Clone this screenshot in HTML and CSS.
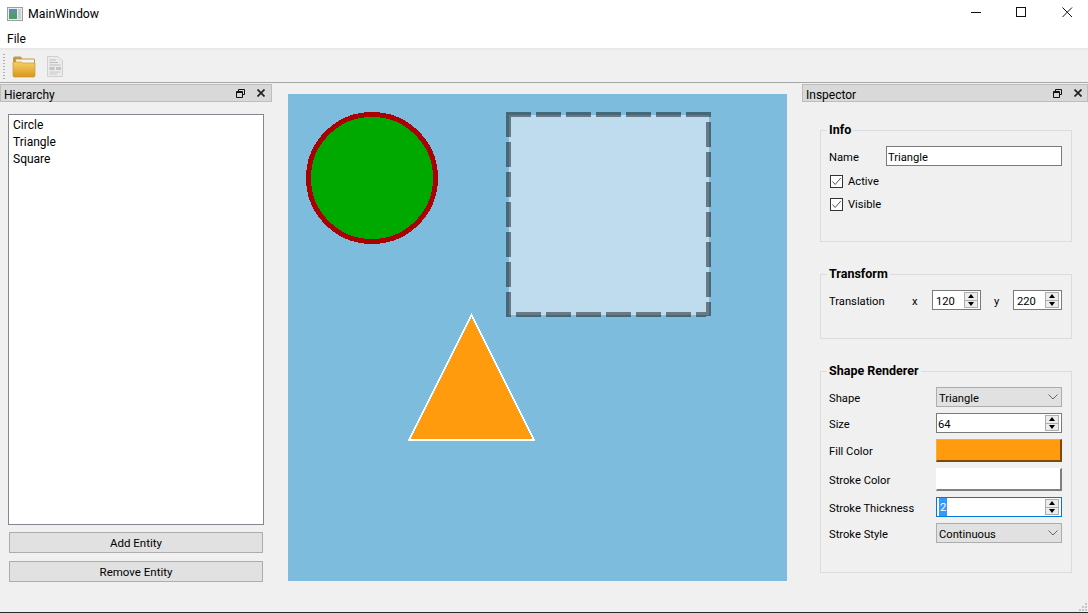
FILE: index.html
```html
<!DOCTYPE html>
<html lang="en">
<head>
    <meta charset="UTF-8">
    <meta name="viewport" content="width=device-width, initial-scale=1.0">
    <title>MainWindow</title>
    <link rel="stylesheet" href="styles.css">
</head>
<body>
    <div id="window">
        <!-- title bar -->
        <div id="titlebar">
            <svg class="app-icon" width="16" height="14" viewBox="0 0 16 14">
                <rect x="0.5" y="0.5" width="15" height="13" fill="#e8ecee" stroke="#9a9fa3"/>
                <rect x="2" y="2" width="8" height="10" fill="#5f8f9c"/>
                <rect x="2" y="7" width="8" height="5" fill="#4f9a6f"/>
                <rect x="11" y="2" width="3" height="10" fill="#c9ced2"/>
            </svg>
            <span class="title-text">MainWindow</span>
            <div class="win-buttons">
                <svg width="46" height="26" viewBox="0 0 46 26"><path class="win-stroke" d="M18 12.500H28"/></svg>
                <svg width="46" height="26" viewBox="0 0 46 26"><rect class="win-stroke" x="17.500" y="7.500" width="9" height="9"/></svg>
                <svg width="46" height="26" viewBox="0 0 46 26"><path class="win-stroke" d="M17.500 7.500L27 17M27 7.500L17.500 17"/></svg>
            </div>
        </div>
        <div id="menubar"><span>File</span></div>

        <!-- toolbar -->
        <div id="toolbar">
            <div class="grip"></div>
            <svg class="tool-icon" width="24" height="23" viewBox="0 0 24 23">
                <defs>
                    <linearGradient id="folderFill" x1="0" y1="0" x2="0" y2="1">
                        <stop offset="0" stop-color="#f6d060"/>
                        <stop offset="1" stop-color="#d9961f"/>
                    </linearGradient>
                </defs>
                <path d="M1 3.500Q1 1.500 3 1.500H8.500L10.500 3.500H22Q23 3.500 23 5V10H1Z" fill="#c2984a"/>
                <rect x="4" y="4.500" width="18" height="4" fill="#f6f3e8"/>
                <path d="M1 7H9L11 8H23V20.500Q23 22 21.500 22H2.500Q1 22 1 20.500Z" fill="url(#folderFill)" stroke="#c58e2a" stroke-width="0.6"/>
            </svg>
            <svg class="tool-icon doc" width="18" height="23" viewBox="0 0 18 23">
                <path d="M1.500 1.500H12L16.500 6V21.500H1.500Z" fill="#ebebeb" stroke="#d0d0d0"/>
                <path d="M3.500 5H10M3.500 7.500H12M3.500 10H14.500" stroke="#bdbdbd" fill="none"/>
                <rect x="3.500" y="12" width="5" height="3" fill="#c4c4c4"/>
                <rect x="10" y="12" width="5" height="3" fill="#c4c4c4"/>
                <path d="M3.500 17H14.500M3.500 19H11" stroke="#c8c8c8" fill="none"/>
            </svg>
        </div>

        <div id="main">
            <!-- left dock -->
            <div id="hierarchy" class="dock">
                <div class="dock-title">
                    <span>Hierarchy</span>
                    <svg class="dock-float" width="9" height="9" viewBox="0 0 9 9"><path d="M2.500 2.500V0.500H8.500V5.500H6.500M0.500 2.500H6.500V8.500H0.500ZM0.500 3.500H6.500" fill="none" stroke="#111"/></svg>
                    <svg class="dock-close" width="8" height="8" viewBox="0 0 8 8"><path d="M0.500 0.500L7.500 7.500M7.500 0.500L0.500 7.500" fill="none" stroke="#222" stroke-width="1.700"/></svg>
                </div>
                <div class="hierarchy-body">
                    <ul id="entities">
                        <li>Circle</li>
                        <li>Triangle</li>
                        <li>Square</li>
                    </ul>
                    <button class="bt">Add Entity</button>
                    <button class="bt">Remove Entity</button>
                </div>
            </div>

            <!-- scene -->
            <svg id="scene" width="499" height="487" viewBox="288 94 499 487">
                <circle class="circle" cx="372" cy="178" r="63.500"/>
                <rect class="square-fill" x="508.500" y="114.500" width="200" height="200"/>
                <path class="dash" d="M506 114.500H711"/>
                <path class="dash" d="M508.500 317V117"/>
                <path class="dash" d="M708.500 122V316"/>
                <path class="dash" d="M516 314.500H706"/>
                <path class="triangle" d="M471.500 315L409 440H534Z"/>
            </svg>

            <!-- right dock -->
            <div id="inspector" class="dock">
                <div class="dock-title">
                    <span>Inspector</span>
                    <svg class="dock-float" width="9" height="9" viewBox="0 0 9 9"><path d="M2.500 2.500V0.500H8.500V5.500H6.500M0.500 2.500H6.500V8.500H0.500ZM0.500 3.500H6.500" fill="none" stroke="#111"/></svg>
                    <svg class="dock-close" width="8" height="8" viewBox="0 0 8 8"><path d="M0.500 0.500L7.500 7.500M7.500 0.500L0.500 7.500" fill="none" stroke="#222" stroke-width="1.700"/></svg>
                </div>
                <div class="inspector-body">
                    <fieldset class="group info">
                        <legend>Info</legend>
                        <div class="name-row">
                            <label>Name</label>
                            <div class="field name-field"><span>Triangle</span></div>
                        </div>
                        <div class="check-row"><span class="check"><svg width="11" height="11" viewBox="0 0 11 11"><path d="M1.500 5.500L4.200 8.500L9.800 2" fill="none" stroke="#555"/></svg></span>Active</div>
                        <div class="check-row"><span class="check"><svg width="11" height="11" viewBox="0 0 11 11"><path d="M1.500 5.500L4.200 8.500L9.800 2" fill="none" stroke="#555"/></svg></span>Visible</div>
                    </fieldset>

                    <fieldset class="group transform">
                        <legend>Transform</legend>
                        <div class="translation">
                            <label class="t-label">Translation</label>
                            <label class="t-x">x</label>
                            <div class="field spin t-spin"><span>120</span><span class="spin-btns"><i class="up"></i><i class="down"></i></span></div>
                            <label class="t-y">y</label>
                            <div class="field spin t-spin"><span>220</span><span class="spin-btns"><i class="up"></i><i class="down"></i></span></div>
                        </div>
                    </fieldset>

                    <fieldset class="group renderer">
                        <legend>Shape Renderer</legend>
                        <div class="form-grid">
                            <label>Shape</label>
                            <div class="combo"><span>Triangle</span><svg width="10" height="6" viewBox="0 0 10 6"><path d="M0.500 0.500L5 5L9.500 0.500" fill="none" stroke="#666"/></svg></div>
                            <label>Size</label>
                            <div class="field spin"><span>64</span><span class="spin-btns"><i class="up"></i><i class="down"></i></span></div>
                            <label>Fill Color</label>
                            <div class="swatch fill"></div>
                            <label>Stroke Color</label>
                            <div class="swatch stroke"></div>
                            <label>Stroke Thickness</label>
                            <div class="field spin focused"><span class="selected">2</span><span class="spin-btns"><i class="up"></i><i class="down"></i></span></div>
                            <label>Stroke Style</label>
                            <div class="combo"><span>Continuous</span><svg width="10" height="6" viewBox="0 0 10 6"><path d="M0.500 0.500L5 5L9.500 0.500" fill="none" stroke="#666"/></svg></div>
                        </div>
                    </fieldset>
                </div>
            </div>
        </div>
        <svg id="size-grip" width="10" height="10" viewBox="0 0 10 10">
            <path d="M7 1h2v2h-2zM4 4h2v2h-2zM7 4h2v2h-2zM1 7h2v2h-2zM4 7h2v2h-2zM7 7h2v2h-2z" fill="#c4c4c4"/>
        </svg>
    </div>
</body>
</html>
```

FILE: styles.css
```css
*{
    box-sizing: border-box;
}

body{
    margin: 0;
    font-family: Roboto, "Open Sans", sans-serif;
    font-size: 11.2px;
    color: #000000;
    background-color: #f0f0f0;
}

#window{
    position: relative;
    width: 1088px;
    height: 613px;
    display: flex;
    flex-direction: column;
    border-bottom: 1px solid #2a2a2a;
    overflow: hidden;
}

#titlebar{
    height: 27px;
    flex: none;
    display: flex;
    align-items: center;
    background-color: #ffffff;
    padding-left: 7px;
}

.title-text{
    margin-left: 5px;
    font-size: 12.300px;
}

.win-buttons{
    margin-left: auto;
    display: flex;
    flex: none;
    align-self: flex-start;
    margin-right: -3px;
}

.win-stroke{
    fill: none;
    stroke: #111111;
    stroke-width: 1;
}

#menubar{
    height: 21px;
    flex: none;
    background-color: #ffffff;
    padding: 5px 0 0 7px;
    font-size: 12px;
}

#toolbar{
    height: 35px;
    flex: none;
    display: flex;
    align-items: center;
    border-top: 2px solid #e9e9e9;
    border-bottom: 1px solid #a6a6a6;
    padding-left: 3px;
}

.grip{
    width: 2px;
    height: 25px;
    background-image: linear-gradient(#b0b0b0 50%, transparent 50%);
    background-size: 2px 3px;
}

.tool-icon{
    margin-left: 7px;
}

.tool-icon.doc{
    margin-left: 10px;
}

#main{
    flex: 1;
    display: flex;
    align-items: flex-start;
    min-height: 0;
}

.dock-title{
    height: 18px;
    margin-top: 1px;
    display: flex;
    align-items: center;
    background-color: #d9d9d9;
    border: 1px solid #bdbdbd;
    padding-left: 3px;
    font-size: 12px;
}

.dock-title span{
    padding-top: 3px;
}

.dock-float{
    margin-left: auto;
}

.dock-close{
    margin: 0 6px 0 12px;
}

#inspector .dock-close{
    margin-right: 5px;
}

#hierarchy{
    width: 272px;
    flex: none;
}

.hierarchy-body{
    display: flex;
    flex-direction: column;
    padding: 12px 8px 0 8px;
}

#entities{
    list-style: none;
    margin: 0 0 7px 0;
    padding: 2px 4px;
    width: 256px;
    height: 411px;
    background-color: #ffffff;
    border: 1px solid #828790;
    font-size: 12px;
}

#entities li{
    height: 17px;
    line-height: 17px;
}

.bt{
    width: 254px;
    height: 21px;
    margin: 0 0 8px 1px;
    padding: 0;
    background-color: #e1e1e1;
    border: 1px solid #adadad;
    font: inherit;
    font-size: 11.500px;
    color: #000000;
}

#scene{
    flex: none;
    margin: 11px 15px 0 16px;
    background-color: #7dbcdd;
}

.circle{
    fill: #00a900;
    stroke: #aa0000;
    stroke-width: 5;
    shape-rendering: crispEdges;
}

.square-fill{
    fill: #bedcee;
    shape-rendering: crispEdges;
}

/* half see-through, so the part over the fill comes out lighter */
.dash{
    fill: none;
    stroke: #000000;
    stroke-opacity: 0.45;
    stroke-width: 5;
    stroke-dasharray: 25 5;
    shape-rendering: crispEdges;
}

.triangle{
    fill: #ff9b0d;
    stroke: #ffffff;
    stroke-width: 2;
    shape-rendering: crispEdges;
}

#inspector{
    width: 286px;
    flex: none;
}

.inspector-body{
    display: flex;
    flex-direction: column;
    gap: 24px;
    padding: 20px 16px 0 18px;
}

.group{
    margin: 0;
    padding: 8px 9px 0 8px;
    border: 1px solid #dcdcdc;
    min-width: 0;
}

.group legend{
    padding: 0 2px;
    margin-left: -2px;
    line-height: 16px;
    font-weight: 700;
    font-size: 12.500px;
}

.group.info{
    height: 120px;
}

.group.transform{
    height: 73px;
}

.group.renderer{
    height: 210px;
}

/* text sits a pixel under the middle of its row */
.group label,
.field > span:first-child,
.combo > span{
    padding-top: 2px;
}

.name-row{
    display: flex;
    align-items: center;
    justify-content: space-between;
    margin-bottom: 4px;
}

.name-field{
    width: 176px;
}

.field{
    height: 20px;
    display: flex;
    align-items: center;
    background-color: #ffffff;
    border: 1px solid #7a7a7a;
    padding-left: 1px;
}

.check-row{
    height: 23px;
    display: flex;
    align-items: center;
    padding-left: 1px;
}

.check{
    width: 13px;
    height: 13px;
    margin-right: 5px;
    background-color: #ffffff;
    border: 1px solid #333333;
    display: flex;
}

.translation{
    display: flex;
    align-items: center;
}

.t-label{
    width: 83px;
}

.t-x{
    width: 20px;
}

.t-y{
    width: 32px;
    padding-left: 13px;
}

.t-spin{
    width: 49px;
}

.spin{
    justify-content: space-between;
    padding-right: 2px;
}

.t-spin{
    padding-left: 3px;
}

.spin-btns{
    width: 14px;
    height: 16px;
    display: flex;
    flex-direction: column;
    gap: 0;
}

.spin-btns i{
    flex: 1;
    display: flex;
    align-items: center;
    justify-content: center;
    background-color: #ececec;
    border: 1px solid #adadad;
}

.spin-btns i + i{
    border-top: none;
}

.spin-btns i::before{
    content: "";
    border-left: 3.500px solid transparent;
    border-right: 3.500px solid transparent;
}

.spin-btns .up::before{
    border-bottom: 4px solid #000000;
}

.spin-btns .down::before{
    border-top: 4px solid #000000;
}

.form-grid{
    display: grid;
    grid-template-columns: 107px 126px;
    row-gap: 6px;
    align-items: center;
}

.combo{
    height: 20px;
    display: flex;
    align-items: center;
    justify-content: space-between;
    background-color: #e1e1e1;
    border: 1px solid #adadad;
    padding: 0 3px 0 2px;
}

.swatch{
    height: 23px;
    border-style: solid;
    border-width: 1px 2px 2px 1px;
}

.swatch.fill{
    background-color: #ff9b0d;
    border-color: #ffab33 #7a4a06 #7a4a06 #ffab33;
}

.swatch.stroke{
    background-color: #ffffff;
    border-color: #ffffff #7f7f7f #7f7f7f #ffffff;
}

.focused{
    border-color: #0078d7;
}

.field > .selected{
    margin-left: 1px;
    background-color: #3399ff;
    color: #ffffff;
    line-height: 16px;
    padding: 0 1px;
}

#size-grip{
    position: absolute;
    right: 0;
    bottom: 0;
}
```
